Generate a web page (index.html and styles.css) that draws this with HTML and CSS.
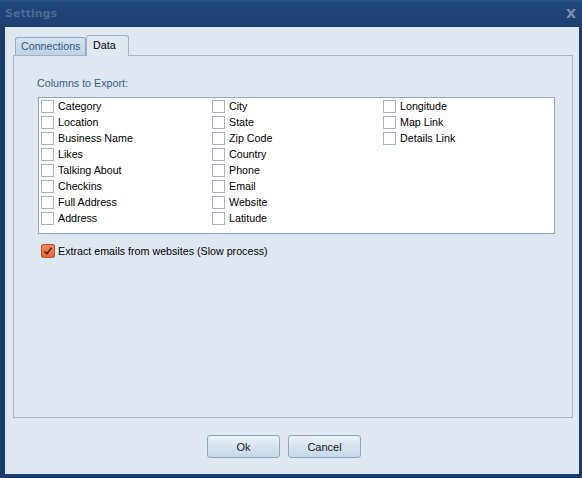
FILE: index.html
```html
<!DOCTYPE html>
<html>
<head>
<meta charset="utf-8">
<link rel="stylesheet" href="styles.css">
</head>
<body>
<div class="window">
  <div class="titlebar">
    <span class="title">Settings</span>
    <span class="close">X</span>
  </div>
  <div class="client">
    <div class="tabs">
      <div class="tab">Connections</div>
      <div class="tab active">Data</div>
    </div>
    <div class="panel">
      <div class="label">Columns to Export:</div>
      <div class="listbox">
        <div class="col">
          <div class="item"><span class="cb"></span>Category</div>
          <div class="item"><span class="cb"></span>Location</div>
          <div class="item"><span class="cb"></span>Business Name</div>
          <div class="item"><span class="cb"></span>Likes</div>
          <div class="item"><span class="cb"></span>Talking About</div>
          <div class="item"><span class="cb"></span>Checkins</div>
          <div class="item"><span class="cb"></span>Full Address</div>
          <div class="item"><span class="cb"></span>Address</div>
        </div>
        <div class="col">
          <div class="item"><span class="cb"></span>City</div>
          <div class="item"><span class="cb"></span>State</div>
          <div class="item"><span class="cb"></span>Zip Code</div>
          <div class="item"><span class="cb"></span>Country</div>
          <div class="item"><span class="cb"></span>Phone</div>
          <div class="item"><span class="cb"></span>Email</div>
          <div class="item"><span class="cb"></span>Website</div>
          <div class="item"><span class="cb"></span>Latitude</div>
        </div>
        <div class="col">
          <div class="item"><span class="cb"></span>Longitude</div>
          <div class="item"><span class="cb"></span>Map Link</div>
          <div class="item"><span class="cb"></span>Details Link</div>
        </div>
      </div>
      <div class="extract">
        <span class="cb checked"><svg width="10" height="10" viewBox="0 0 10 10"><path d="M1.5 5.2 L3.8 7.8 L8.6 1.8" fill="none" stroke="#5a1e08" stroke-width="1.6"/></svg></span>
        Extract emails from websites (Slow process)
      </div>
    </div>
    <div class="footer">
      <button class="btn">Ok</button>
      <button class="btn">Cancel</button>
    </div>
  </div>
</div>
</body>
</html>
```
FILE: styles.css
```css
html, body {
  margin: 0;
  padding: 0;
}
body {
  font-family: "Liberation Sans", Arial, sans-serif;
  font-size: 10.7px;
  color: #000;
}
.window {
  width: 582px;
  height: 478px;
  background: #1b3c69;
  display: flex;
  flex-direction: column;
  box-sizing: border-box;
}
.titlebar {
  height: 27px;
  flex: none;
  background: linear-gradient(#2b5388 0px, #1f467b 3px, #1c4070 27px);
  display: flex;
  align-items: center;
  justify-content: space-between;
  padding: 0 6px 0 5px;
}
.title {
  color: #5a7aa2;
  font-family: "DejaVu Sans", sans-serif;
  font-weight: bold;
  font-size: 11px;
  margin-top: -1px;
  opacity: 0.75;
}
.close {
  color: #7b93b3;
  font-family: "DejaVu Sans", sans-serif;
  font-weight: bold;
  font-size: 13px;
  margin-top: -1px;
}
.client {
  flex: 1;
  margin: 0 3px 4px 5px;
  background: #dfe8f1;
  padding: 8px 6px 0 8px;
  display: flex;
  flex-direction: column;
}
.tabs {
  display: flex;
  align-items: flex-end;
  height: 20px;
  padding-left: 2px;
  position: relative;
  z-index: 1;
}
.tab {
  height: 18px;
  box-sizing: border-box;
  border: 1px solid #91a9c2;
  border-bottom: none;
  border-radius: 3px 3px 0 0;
  background: linear-gradient(#d4e3f0, #bed3e6);
  color: #3b5a7d;
  padding: 2px 5px 0 5px;
  width: 71px;
  margin-bottom: 0;
}
.tab.active {
  height: 21px;
  width: 43px;
  background: #dfe8f1;
  color: #000;
  border-color: #a3b2c2;
  padding: 3px 6px 0 6px;
  margin-bottom: -1px;
  margin-left: 0;
}
.panel {
  height: 363px;
  box-sizing: border-box;
  border: 1px solid #a7b3bf;
  padding: 21px 18px 0 23px;
}
.label {
  color: #3a5e8a;
  line-height: 13px;
  margin-bottom: 7px;
}
.listbox {
  width: 517px;
  height: 137px;
  box-sizing: border-box;
  border: 1px solid #8ea8c4;
  background: #fff;
  display: flex;
  padding: 0 0 0 2px;
  margin-left: 1px;
}
.col {
  width: 171px;
  display: flex;
  flex-direction: column;
}
.item {
  height: 16px;
  display: flex;
  align-items: center;
  line-height: 16px;
}
.cb {
  width: 13px;
  height: 13px;
  box-sizing: border-box;
  border: 1px solid #a3b4c7;
  background: #fff;
  margin-right: 4px;
  flex: none;
  display: inline-flex;
  align-items: center;
  justify-content: center;
}
.extract {
  display: flex;
  align-items: center;
  margin-top: 9px;
  margin-left: 4px;
  height: 16px;
}
.cb.checked {
  width: 14px;
  height: 14px;
  background: linear-gradient(#f08a5c, #e4663a);
  border: 1px solid #b9532e;
  border-radius: 2px;
  margin-right: 3px;
}
.footer {
  display: flex;
  justify-content: center;
  gap: 8px;
  padding-top: 17px;
  padding-right: 18px;
}
.btn {
  width: 73px;
  height: 23px;
  box-sizing: border-box;
  border: 1px solid #8fa5bb;
  border-radius: 3px;
  background: linear-gradient(#eaf1f7, #d6e3ef 50%, #c7d9ea);
  font-family: "Liberation Sans", Arial, sans-serif;
  font-size: 11px;
  color: #1a1a1a;
  padding: 0;
}
```
